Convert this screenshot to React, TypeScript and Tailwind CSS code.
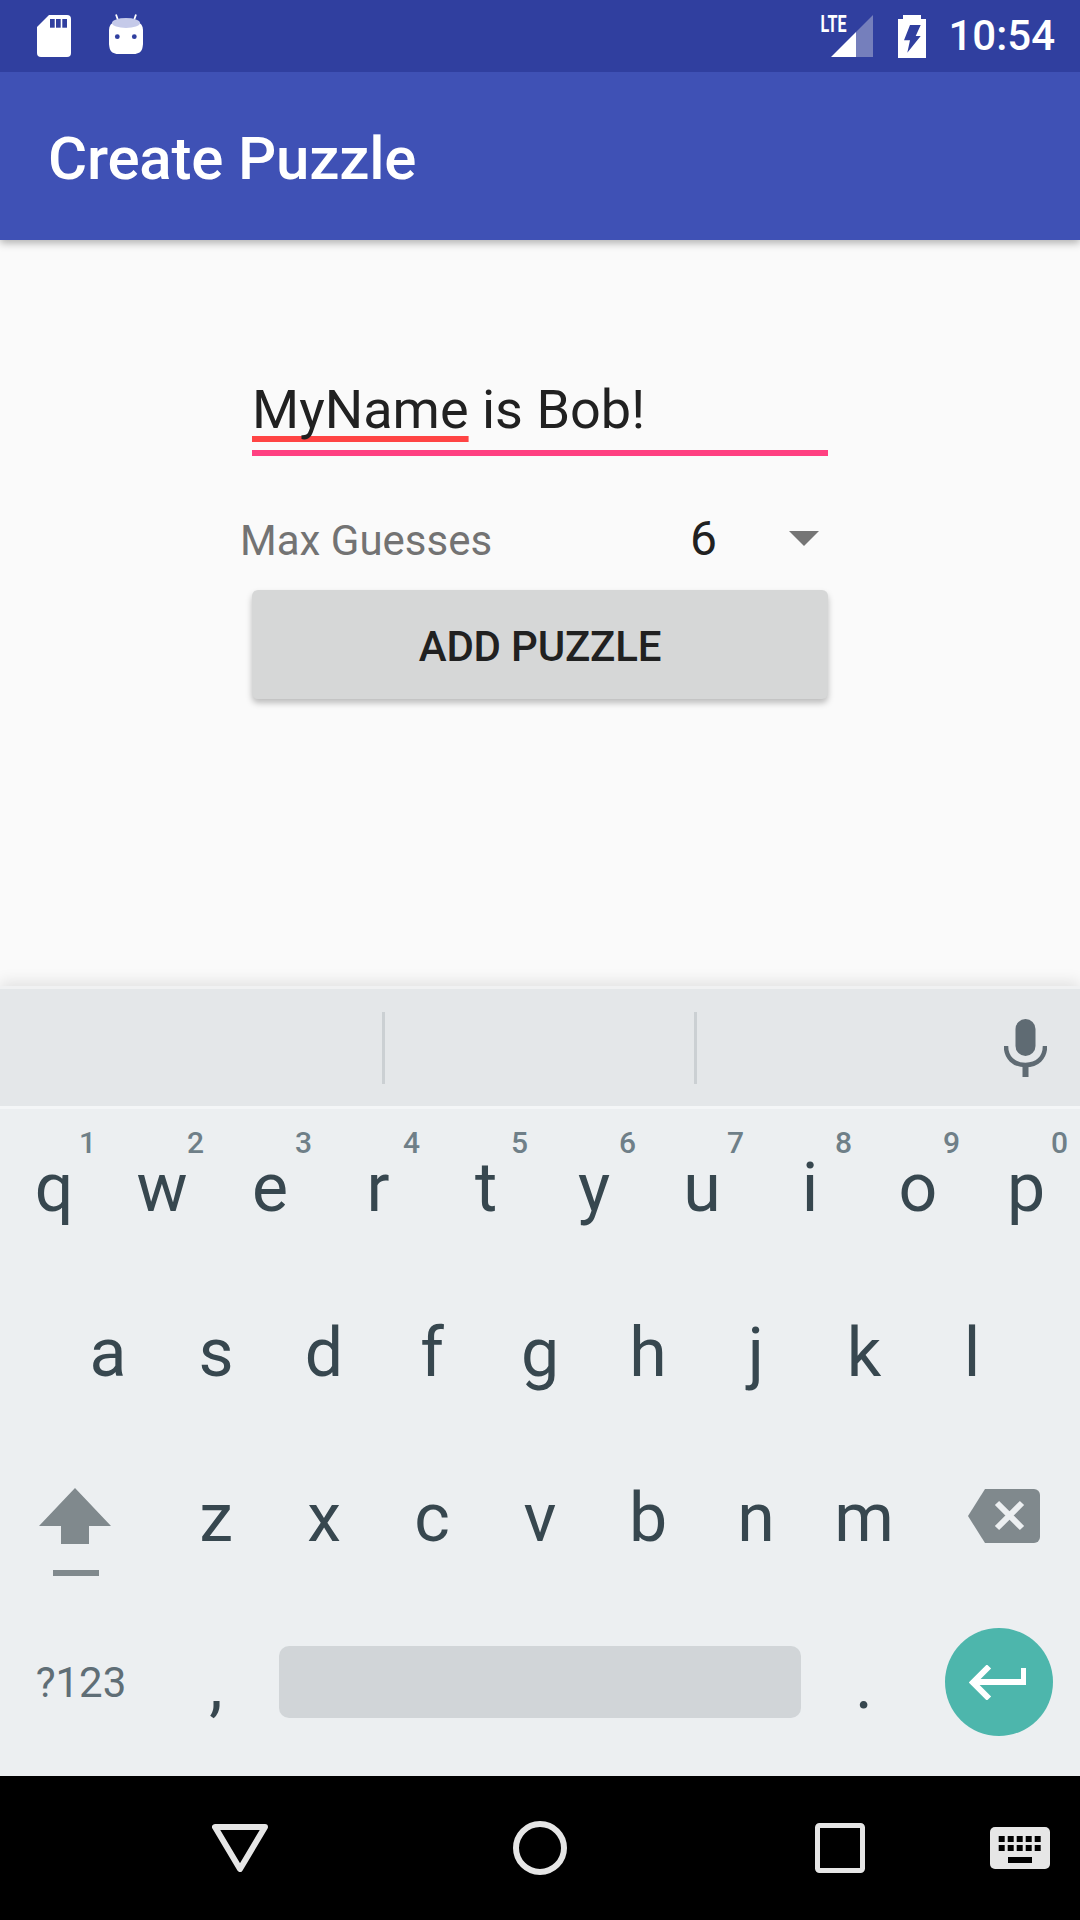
const font = { fontFamily: 'Roboto, sans-serif' };

const row1 = [['q','1'],['w','2'],['e','3'],['r','4'],['t','5'],['y','6'],['u','7'],['i','8'],['o','9'],['p','0']];
const row2 = ['a','s','d','f','g','h','j','k','l'];
const row3 = ['z','x','c','v','b','n','m'];

function Key({ label, hint }: { label: string; hint?: string }) {
  return (
    <div className={hint ? 'relative w-[108px] text-center text-[68px] leading-[158px] text-[#37474F]' : 'relative w-[108px] text-center text-[68px] leading-[160px] text-[#37474F]'}>
      {label}
      {hint && (
        <span className="absolute right-[12px] top-[16px] text-[30px] leading-[36px] font-medium text-[#6F7F88]">{hint}</span>
      )}
    </div>
  );
}

function SdCard() {
  return (
    <svg width="34" height="42" viewBox="0 0 34 42">
      <path d="M12 0H30a4 4 0 0 1 4 4V38a4 4 0 0 1-4 4H4a4 4 0 0 1-4-4V12Z" fill="#fff" />
      <rect x="13" y="4" width="4.7" height="8.7" fill="#303F9F" />
      <rect x="19" y="4" width="4.7" height="8.7" fill="#303F9F" />
      <rect x="25.3" y="4" width="4.7" height="8.7" fill="#303F9F" />
    </svg>
  );
}

function AndroidHead() {
  return (
    <svg width="34" height="40" viewBox="0 0 34 40">
      <path d="M7 0.5L10 9M27 0.5L24 9" stroke="#fff" strokeWidth="1.8" fill="none" />
      <path d="M6 7.5C12 4.5 22 4.5 28 7.5C32 9 34 12 34 16C34.6 22 34.6 27 33.6 33C33 38 29 40 25 40H9C5 40 1 38 .4 33C-.6 27 -.6 22 0 16C0 12 2 9 6 7.5Z" fill="#fff" />
      <ellipse cx="17" cy="9" rx="14" ry="5" fill="#C5CAE9" />
      <circle cx="8.3" cy="22.7" r="2.4" fill="#303F9F" />
      <circle cx="25.3" cy="22.7" r="2.4" fill="#303F9F" />
    </svg>
  );
}

function Signal() {
  return (
    <div className="relative h-[42px] w-[52px]">
      <svg className="absolute right-0 top-0" width="42" height="42" viewBox="0 0 42 42">
        <path d="M25 17L42 0V42H25Z" fill="#757FBC" />
        <path d="M0 42L25 17V42Z" fill="#fff" />
      </svg>
      <span className="absolute left-[-6px] top-[-1px] origin-center scale-x-[0.7] text-[23px] leading-[22px] font-bold text-white">LTE</span>
    </div>
  );
}

function Battery() {
  return (
    <svg width="28" height="43" viewBox="0 0 28 43">
      <path d="M5 0H23V4H28V43H0V4H5Z" fill="#fff" />
      <path d="M12 10H22.7L17.7 21H22.7L9.3 37.7L12 25.3H6Z" fill="#303F9F" />
    </svg>
  );
}

function Mic() {
  return (
    <svg width="43" height="58" viewBox="0 0 43 58">
      <rect x="11.5" y="0" width="20" height="37" rx="10" fill="#5F6B73" />
      <path d="M2 27C2 39 10 46 21.5 46C33 46 41 39 41 27" stroke="#5F6B73" strokeWidth="4.5" fill="none" />
      <rect x="18.5" y="45" width="6" height="13" fill="#5F6B73" />
    </svg>
  );
}

function Shift() {
  return (
    <svg width="72" height="88" viewBox="0 0 72 88">
      <path d="M36 0L72 38H50V56H22V38H0Z" fill="#80898D" />
      <rect x="14" y="82" width="46" height="6" fill="#80898D" />
    </svg>
  );
}

function Backspace() {
  return (
    <svg width="72" height="54" viewBox="0 0 72 54">
      <path d="M17 0H66a6 6 0 0 1 6 6V48a6 6 0 0 1-6 6H17L0 27Z" fill="#80898D" />
      <path d="M29 14L54 39M54 14L29 39" stroke="#ECEFF1" strokeWidth="6" fill="none" />
    </svg>
  );
}

function Enter() {
  return (
    <svg width="57" height="35" viewBox="0 0 57 35">
      <path d="M55 3V17H4M20 1.500L4 17.500L20 33.500" stroke="#fff" strokeWidth="6" fill="none" />
    </svg>
  );
}

function KeyboardIcon() {
  const cols = [8.700, 17.700, 26.700, 35.700, 44.700];
  return (
    <svg width="60" height="42" viewBox="0 0 60 42">
      <rect width="60" height="42" rx="5" fill="#E6E6E6" />
      {cols.map((x) => (
        <g key={x}>
          <rect x={x} y="9" width="6" height="6" fill="#000" />
          <rect x={x} y="18" width="6" height="6" fill="#000" />
        </g>
      ))}
      <rect x="18" y="30" width="24" height="6" fill="#000" />
    </svg>
  );
}

export default function App() {
  return (
    <div className="flex h-[1920px] w-[1080px] flex-col overflow-hidden bg-[#FAFAFA]" style={font}>
      <header className="relative z-10 shadow-[0_3px_8px_rgba(0,0,0,0.3)]">
        <div className="flex h-[72px] items-center bg-[#303F9F]">
          <div className="ml-[37px]"><SdCard /></div>
          <div className="ml-[38px] mt-[-5px]"><AndroidHead /></div>
          <div className="ml-auto flex items-center">
            <Signal />
            <div className="ml-[25px]"><Battery /></div>
            <span className="ml-[22px] mr-[25px] text-[42px] leading-[50px] font-medium text-white">10:54</span>
          </div>
        </div>
        <div className="flex h-[168px] items-center bg-[#3F51B5] pl-[48px]">
          <h1 className="mt-[5px] text-[60px] leading-[64px] font-medium tracking-[-0.2px] text-white">Create Puzzle</h1>
        </div>
      </header>

      <main className="flex-1 pt-[138px]">
        <div className="mx-auto w-[576px]">
          <div className="border-b-[6px] border-[#FF4081] pb-[8px] text-[54px] leading-[64px] text-[#212121]">
            <span className="underline decoration-[#FF4444] decoration-[6px] underline-offset-[8px] [text-decoration-skip-ink:none]">MyName</span> is Bob!
          </div>
          <div className="mt-[55px] flex items-baseline">
            <span className="ml-[-12px] w-[450px] text-[42px] leading-[56px] text-[#737373]">Max Guesses</span>
            <span className="text-[48px] leading-[56px] text-[#212121]">6</span>
            <svg className="mb-[3px] ml-auto mr-[9px] self-center" width="30" height="15" viewBox="0 0 30 15">
              <path d="M0 0H30L15 15Z" fill="#757575" />
            </svg>
          </div>
          <button className="mt-[21px] flex h-[109px] w-full items-center justify-center rounded-[6px] bg-[#D6D7D7] pt-[3px] text-[42px] font-medium tracking-[-0.2px] text-[#212121] shadow-[0_4px_6px_rgba(0,0,0,0.25)]">
            ADD PUZZLE
          </button>
        </div>
      </main>

      <section className="relative shadow-[0_-4px_14px_rgba(0,0,0,0.1)]">
        <div className="h-[3px] bg-[#F0F1F2]" />
        <div className="flex h-[117px] items-center bg-[#E4E7E9]">
          <div className="ml-[382px] h-[72px] w-[3px] bg-[#CBD0D3]" />
          <div className="ml-[309px] h-[72px] w-[3px] bg-[#CBD0D3]" />
          <div className="ml-[307px]"><Mic /></div>
        </div>
        <div className="h-[3px] bg-[#F4F6F7]" />
        <div className="bg-[#ECEFF1]">
          <div className="flex h-[164px]">
            {row1.map(([l, h]) => <Key key={l} label={l} hint={h} />)}
          </div>
          <div className="flex h-[165px] justify-center">
            {row2.map((l) => <Key key={l} label={l} />)}
          </div>
          <div className="flex h-[165px]">
            <div className="w-[162px] pl-[39px] pt-[50px]"><Shift /></div>
            {row3.map((l) => <Key key={l} label={l} />)}
            <div className="w-[162px] pl-[50px] pt-[51px]"><Backspace /></div>
          </div>
          <div className="flex h-[173px] items-start">
            <div className="mt-[52px] w-[162px] text-center text-[42px] leading-[56px] text-[#5F6E76]">?123</div>
            <div className="mt-[2px]"><Key label="," /></div>
            <div className="mx-[9px] mt-[43px] h-[72px] w-[522px] rounded-[10px] bg-[#D1D5D8]" />
            <div className="mt-[2px]"><Key label="." /></div>
            <div className="ml-[27px] mt-[25px] flex h-[108px] w-[108px] items-center justify-center rounded-full bg-[#4DB6AC]">
              <div className="mr-[3px]"><Enter /></div>
            </div>
          </div>
        </div>
      </section>

      <nav className="flex h-[144px] items-center bg-black pl-[212px]">
        <svg width="56" height="48" viewBox="0 0 56 48">
          <path d="M3 3H53L28 45Z" stroke="#E6E6E6" strokeWidth="6" strokeLinejoin="round" fill="none" />
        </svg>
        <svg className="ml-[245px]" width="54" height="54" viewBox="0 0 54 54">
          <circle cx="27" cy="27" r="24" stroke="#E6E6E6" strokeWidth="6" fill="none" />
        </svg>
        <svg className="ml-[248px]" width="50" height="50" viewBox="0 0 50 50">
          <rect x="2.500" y="2.500" width="45" height="45" rx="2" stroke="#E6E6E6" strokeWidth="5" fill="none" />
        </svg>
        <div className="ml-[125px]"><KeyboardIcon /></div>
      </nav>
    </div>
  );
}
